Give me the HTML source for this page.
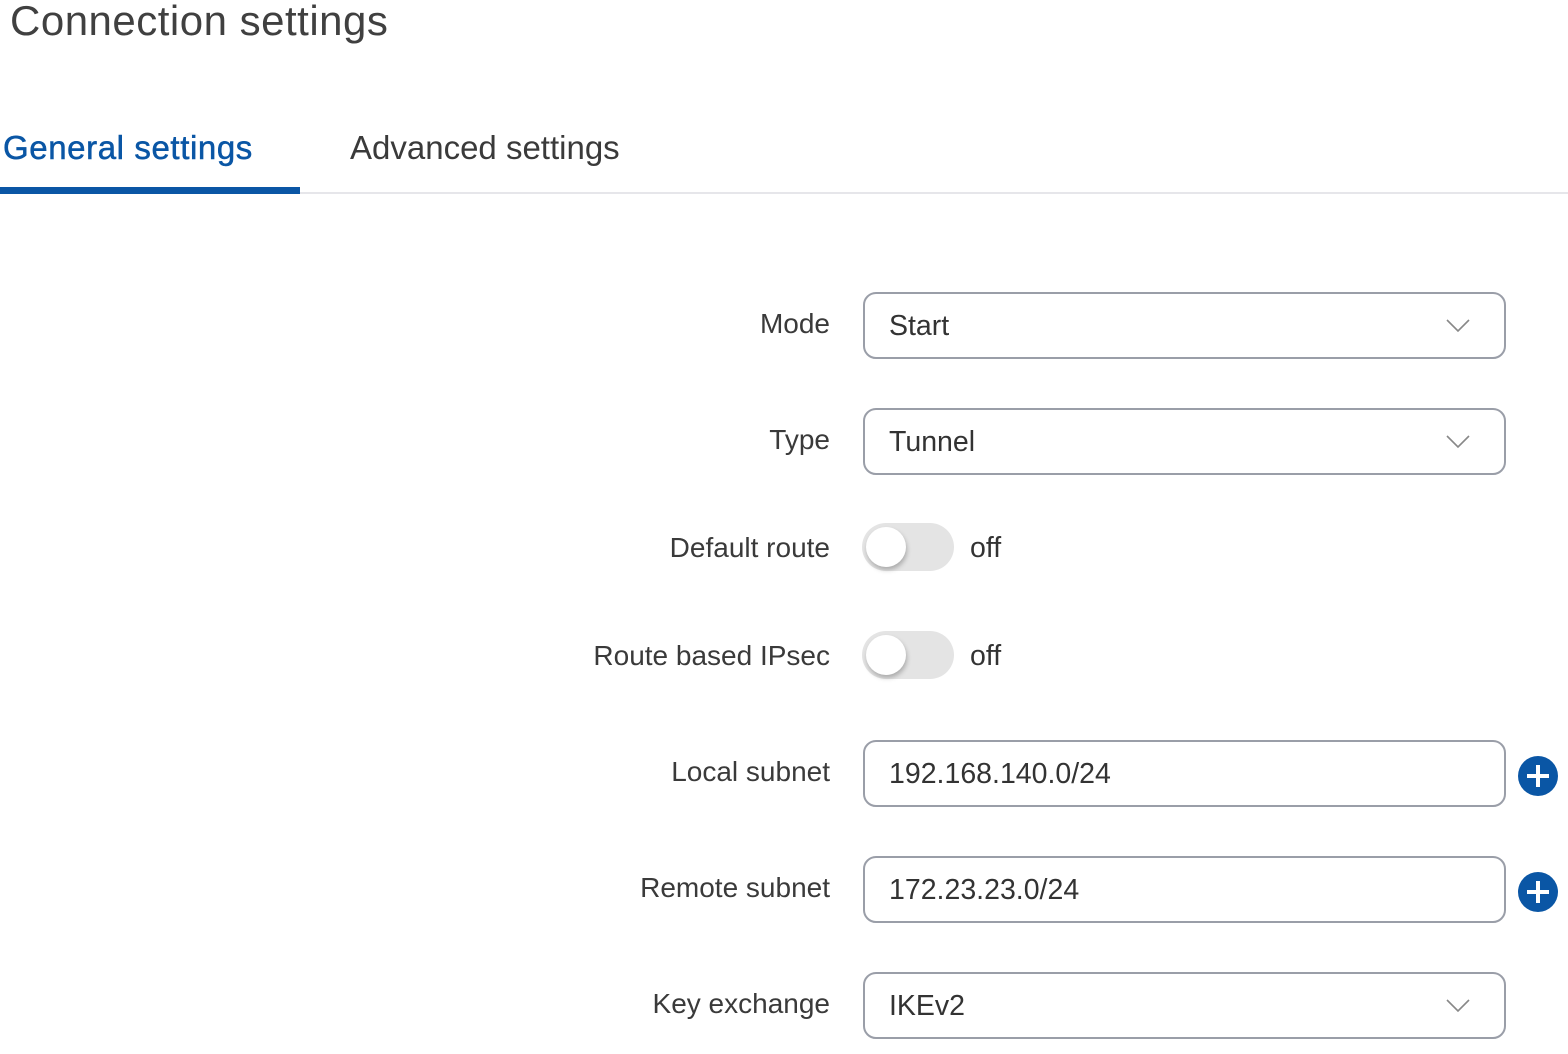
<!DOCTYPE html>
<html><head><meta charset="utf-8"><style>
*{margin:0;padding:0;box-sizing:border-box}
body{width:1568px;height:1054px;background:#fff;font-family:"Liberation Sans",sans-serif;color:#333;position:relative;overflow:hidden}
.a{position:absolute;white-space:nowrap}
.lbl{position:absolute;right:738px;font-size:28px;color:#3a3a3a;line-height:34px}
.inp{position:absolute;left:863px;width:643px;height:67px;border:2px solid #9a9ea8;border-radius:13px;font-size:28.5px;color:#333;padding-left:24px;line-height:65px}
.chev{position:absolute;right:34px;top:25px}
.tg{position:absolute;left:862px;width:92px;height:48px;border-radius:24px;background:#e4e4e4}
.tg:after{content:"";position:absolute;left:4px;top:4px;width:40px;height:40px;border-radius:50%;background:#fff;box-shadow:1px 3px 5px rgba(0,0,0,.25)}
.off{position:absolute;left:970px;font-size:28.5px;color:#333;line-height:34px}
.plus{position:absolute;left:1518px}
</style></head><body>
<div class="a" style="left:10px;top:-4px;font-size:42px;letter-spacing:0.5px;color:#404040;line-height:50px">Connection settings</div>
<div class="a" style="left:3px;top:130px;font-size:33px;letter-spacing:0.6px;color:#0a56a5;line-height:36px;-webkit-text-stroke:0.5px #0a56a5">General settings</div>
<div class="a" style="left:350px;top:130px;font-size:33px;color:#3a3a3a;line-height:36px">Advanced settings</div>
<div class="a" style="left:0;top:192px;width:1568px;height:2px;background:#e6e6ea"></div>
<div class="a" style="left:0;top:187px;width:300px;height:7px;background:#0a56a5"></div>

<div class="lbl" style="top:307px">Mode</div>
<div class="inp" style="top:292px">Start<svg class="chev" width="24" height="14" viewBox="0 0 24 14"><path d="M1 1L12 12L23 1" fill="none" stroke="#888" stroke-width="1.6"/></svg></div>

<div class="lbl" style="top:423px">Type</div>
<div class="inp" style="top:408px">Tunnel<svg class="chev" width="24" height="14" viewBox="0 0 24 14"><path d="M1 1L12 12L23 1" fill="none" stroke="#888" stroke-width="1.6"/></svg></div>

<div class="lbl" style="top:531px">Default route</div>
<div class="tg" style="top:523px"></div><div class="off" style="top:531px">off</div>

<div class="lbl" style="top:639px">Route based IPsec</div>
<div class="tg" style="top:631px"></div><div class="off" style="top:639px">off</div>

<div class="lbl" style="top:755px">Local subnet</div>
<div class="inp" style="top:740px">192.168.140.0/24</div>
<svg class="plus" style="top:756px" width="40" height="40" viewBox="0 0 40 40"><circle cx="20" cy="20" r="20" fill="#0a56a5"/><path d="M20 9V31M9 20H31" stroke="#fff" stroke-width="4"/></svg>

<div class="lbl" style="top:871px">Remote subnet</div>
<div class="inp" style="top:856px">172.23.23.0/24</div>
<svg class="plus" style="top:872px" width="40" height="40" viewBox="0 0 40 40"><circle cx="20" cy="20" r="20" fill="#0a56a5"/><path d="M20 9V31M9 20H31" stroke="#fff" stroke-width="4"/></svg>

<div class="lbl" style="top:987px">Key exchange</div>
<div class="inp" style="top:972px">IKEv2<svg class="chev" width="24" height="14" viewBox="0 0 24 14"><path d="M1 1L12 12L23 1" fill="none" stroke="#888" stroke-width="1.6"/></svg></div>
</body></html>
